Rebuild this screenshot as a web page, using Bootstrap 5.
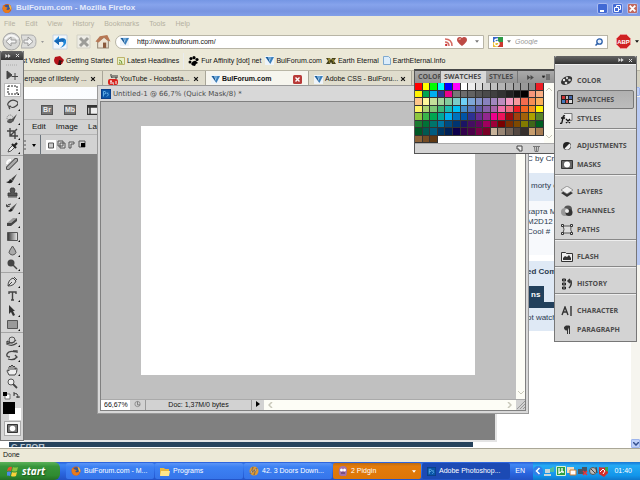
<!DOCTYPE html>
<html lang="en">
<head>
<meta charset="utf-8">
<meta name="viewport" content="width=device-width, initial-scale=1">
<title>BulForum.com - Mozilla Firefox</title>
<link href="https://cdn.jsdelivr.net/npm/bootstrap@5.3.0/dist/css/bootstrap.min.css" rel="stylesheet">
<style>
html,body{height:100%}
body{font:7px/10px "Liberation Sans",Arial,sans-serif;color:#111;background:#ece9d8;overflow:hidden}
button,input{font:inherit;color:inherit;border:0;background:none;padding:0;margin:0;border-radius:0}
a{color:inherit;text-decoration:none}
svg{display:block;flex:none}
h1,h2,p{font:inherit;margin:0}
.desk{min-height:100vh}
.caption-bar{height:16px;background:linear-gradient(#7596e4,#86a3ec 30%,#7894e0 70%,#829fe8);color:#e4ebfb;padding:0 2px}
.caption-bar h1{font:bold 8px/14px "Liberation Sans",sans-serif}
.win-btn{width:11px;height:11px;border:1px solid #a9bbf0;border-radius:2px;background:#4169d4}
.win-btn.closer{background:#c0685f}
.menu-row{height:16px;gap:10px;padding-left:4px;color:#b4b0a0}
.nav-row{height:19px;padding:0 1px 0 2px}
.back-btn{width:19px;height:19px}
.url-box{height:14px;background:#fff;border:1px solid #b8b5a6}
.url-box input{min-width:0;outline:0}
.search-box{width:120px}
.search-box input::placeholder{color:#999;font-style:italic;opacity:1}
.mark-row{height:19px;padding-left:12px;white-space:nowrap}
.mark-row a{display:flex;align-items:center;gap:2px;margin-right:4px}
.tab-strip{height:17px;background:#d3d0c0;border-top:1px solid #b9b6a6}
.tab-item{width:103px;border-right:1px solid #a9a698;padding:0 6px 0 5px;gap:2px;background:#e0ddcd;white-space:nowrap}
.tab-item.current{background:#f6f5ee;font-weight:bold}
.page{background:#fff;min-height:0;overflow:hidden}
.forum{width:104px;margin-left:auto;font:8px/10px "Liberation Sans",sans-serif;color:#2b3b50}
.forum p{padding:0 5px 0 0;white-space:nowrap;overflow:hidden;height:10px}
.cell-b{background:#dfe9f5}
.cell-w{background:#f7f9fc}
.forum-tab{background:#22405c;color:#fff;font-weight:bold}
.page-scroll{width:9px;background:#f6f5ef}
.scroll-end{height:9px;background:#bfd0f8;border:1px solid #9db4ec;border-radius:1px}
.scroll-thumb{height:168px;background:#b9caf3;margin-top:1px}
.cut-line{left:0;right:167px;bottom:1px;height:5px;background:#26425c;overflow:hidden;color:#b9c6d2;font:bold 9px/10px "Liberation Sans",sans-serif;padding-left:2px;border-left:9px solid #fff}
.status-row{height:14px;border-top:1px solid #aaa797;padding-left:3px;padding-bottom:1px}
.task-row{height:18px;background:linear-gradient(#2a5ed8,#3f86f3 15%,#2b66e0 60%,#2353c6);color:#fff}
.start-btn{width:60px;border-radius:0 6px 6px 0;background:linear-gradient(#5cb25a,#37953a 25%,#2f8a30 75%,#246f25);font:italic bold 10px/14px "Open Sans",sans-serif;color:#fff;text-shadow:1px 1px 1px #1c5a1e;margin-right:6px;padding-right:8px}
.task-btn{flex:0 1 88px;min-width:0;height:16px;gap:3px;padding:0 5px;border-radius:2px;margin-right:1px;background:linear-gradient(#5b95f7,#3c81f3 25%,#3675ea);text-align:left;white-space:nowrap;overflow:hidden}
.task-btn.alert-on{background:linear-gradient(#b96a12,#e37b0b 20%,#dd7607)}
.task-btn.pressed{background:#1c4ab4}
.tray{width:107px;background:linear-gradient(#1876d4,#25aaf4 20%,#1295ea 75%,#0f78cc);padding:0 8px 0 0;gap:1px}
.tool-pal{left:0;top:51px;width:24px;background:#d5d5d5;border:1px solid #777;border-top:0}
.dark-cap{height:9px;background:linear-gradient(#666,#333);color:#ddd;border-radius:2px 2px 0 0;gap:4px;padding-right:3px}
.dock .dark-cap{height:8px}
.tool-set{display:grid;grid-auto-rows:1fr;justify-items:center;padding:0 2px;border-bottom:1px solid #a5a5a5;margin-bottom:1px}
.tool-set button{width:17px;display:flex;align-items:center;justify-content:center;position:relative;color:#444}
.tool-set button.more::after{content:"";position:absolute;right:1px;bottom:1px;border:1px solid;border-color:transparent #111 #111 transparent}
.tool-set button.chosen{background:#fff;border:1px solid #bbb}
.set-a{height:88px}.set-b{height:116px}.set-c{height:59px}.set-d{height:57px;border:0;margin:0}
.ps-app{left:24px;top:87px;width:473px;height:355px;background:#808080;border-right:2px solid #e4e4e4;border-bottom:2px solid #e4e4e4}
.ps-top{height:12px;background:linear-gradient(90deg,#fff,#e3edfb)}
.ps-bar{background:#d2d2d2;border-top:1px solid #b4b4b4}
.ps-icons{height:20px;gap:11px;padding-left:17px}
.ps-menu{height:15px;gap:10px;font-size:8px;padding-left:8px}
.ps-opts{height:20px;gap:2px}
.app-tag{width:12px;height:10px;background:#777;border:1px solid #555;color:#eee;font-weight:bold;line-height:8px;text-align:center}
.doc-win{left:97px;top:85px;width:432px;height:329px;background:#d8d8d8;border:1px solid #999;padding:1px 2px 2px}
.doc-cap{height:14px;gap:2px;padding-left:1px;color:#4a4a4a}
.doc-cap h2{font:7px/10px "DejaVu Sans",sans-serif}
.doc-body{border:1px solid #808080;background:#c0c0c0}
.canvas-wrap{padding:24px 41px 24px 40px}
.sheet{background:#fff}
.rail{background:#fdfdf6;color:#c9c8ba}
.rail-v{width:9px}
.doc-foot{height:11px;background:#d2d2d2;border-top:1px solid #aaa}
.zoom-box{width:29px;background:#fff;padding-left:3px;line-height:10px}
.doc-size{width:107px;text-align:center;border:solid #999;border-width:0 1px}
.sw-pal{left:414px;top:69px;width:141px;background:#d4d4d4;border:1px solid #555;border-top:2px solid #484848;font:bold 7px/10px "Open Sans",sans-serif}
.sw-tabs{height:12px;background:linear-gradient(#aaa,#929292);color:#4a4a4a}
.sw-tabs button{padding:0 4px 0 3px;border-right:1px solid #777;overflow:hidden}
.sw-tabs button.current{background:#d8d8d8;border-color:#d8d8d8}
.sw-tabs .tab-cut{width:26px;white-space:nowrap}
.sw-grid{display:grid;grid-template-columns:repeat(17,1fr);grid-template-rows:repeat(8,1fr);height:60px;width:129px;background:#fff}
.sw-grid i{border:solid #333;border-width:0 1px 1px 0}
.sw-foot{height:10px;border-top:1px solid #aaa;gap:10px;padding:0 14px;color:#444}
.dock{left:554px;top:56px;width:83px;background:#d3d3d3;border:1px solid #777;border-top:0}
.dock-set{padding:6px 2px 0;border-bottom:1px solid #888;border-top:1px solid #eee}
.dock-set:last-child{border-bottom:0;padding-bottom:2px}
.dock-set button{height:19px;width:100%;gap:3px;padding:0 3px;color:#4c4c4c;font:bold 7px/10px "Open Sans",sans-serif;display:flex;align-items:center}
.dock-set button.chosen{background:linear-gradient(#b0b0b0,#bcbcbc);border:1px solid #777;border-radius:2px;padding:0 2px}
.ink-box{height:30px}
.fg{left:2px;top:11px;width:12px;height:12px;background:#000}
.bg{left:8px;top:17px;width:12px;height:12px;background:#fff}
.mask-btn{height:15px;width:17px;background:#f4f4f4;border:1px solid #aaa;margin:0 auto 4px;display:flex;align-items:center;justify-content:center}
</style>
<script src="https://cdn.jsdelivr.net/npm/bootstrap@5.3.0/dist/js/bootstrap.bundle.min.js"></script>
</head>
<body>
<svg width="0" height="0" class="position-absolute" aria-hidden="true">
<symbol id="fox" viewBox="0 0 12 12"><circle cx="6" cy="6" r="5.4" fill="#d85f15"/><path d="M3 3q3-3 6-.5L10 6Q8 9 5 7.500z" fill="#31579d"/><path d="M1 2 4 4 7 5 5 7Q7 9 10 6 10 11 6 11.500 0 11 1 2" fill="#e77b1b"/><path d="M8 1q4 2 3 7l-2-3" fill="#f5bb3a"/></symbol>
<symbol id="vee" viewBox="0 0 10 10"><path d="M0 0h10v10H0z" fill="#eef4fa"/><path d="M.5 1h3L6 9z" fill="#1d5d9a"/><path d="M3 1h4L5.500 5z" fill="#6ba6d6"/><path d="M7 1h3L6 9 5 6z" fill="#3b80bd"/></symbol>
<symbol id="ps" viewBox="0 0 12 12"><path d="M0 0h12v12H0z" fill="#0c3c84"/><path d="M1 1h10v10H1z" fill="#0a56a8"/><path d="M3 9V3h2q2 2 0 3H3M9 5H7l2 2-2 2" stroke="#6fbcf0" fill="none"/></symbol>
<symbol id="x" viewBox="0 0 8 8"><path d="m1.500 1.500 5 5m0-5-5 5" stroke="currentColor" stroke-width="1.600"/></symbol>
<symbol id="ff" viewBox="0 0 8 6"><path d="m0 0 4 3-4 3zM4 0l4 3-4 3z" fill="currentColor"/></symbol>
<symbol id="down" viewBox="0 0 6 4"><path d="M0 0h6L3 4z" fill="currentColor"/></symbol>
</svg>

<div class="desk d-flex flex-column position-relative">
<header>
<div class="caption-bar d-flex align-items-center">
<svg width="10" height="11"><use href="#fox"/></svg><h1 class="ms-1">BulForum.com - Mozilla Firefox</h1>
<div class="ms-auto d-flex gap-1">
<button class="win-btn" aria-label="Minimize"><svg width="9" height="9" viewBox="0 0 9 9"><path d="M2 7h4" stroke="#fff" stroke-width="2"/></svg></button>
<button class="win-btn" aria-label="Restore"><svg width="9" height="9" viewBox="0 0 9 9"><path d="M3.500 3V1.500h4v4H6M1.500 3.500h4v4h-4z" stroke="#fff" fill="none"/></svg></button>
<button class="win-btn closer" aria-label="Close"><svg width="9" height="9" viewBox="0 0 8 8" color="#fff"><use href="#x"/></svg></button>
</div></div>
<nav class="menu-row d-flex align-items-center"><a href="#">File</a><a href="#">Edit</a><a href="#">View</a><a href="#">History</a><a href="#">Bookmarks</a><a href="#">Tools</a><a href="#">Help</a></nav>
<div class="nav-row d-flex align-items-center">
<button class="back-btn" aria-label="Back"><svg width="19" height="19" viewBox="0 0 19 19"><circle cx="9.500" cy="9.500" r="8.500" fill="#d7d7d5" stroke="#a2a2a2"/><path d="M3 7q6-7 13 0" stroke="#f6f6f6" stroke-width="2" fill="none"/><path d="m9 5-5 4.500L9 14v-3h5V8H9z" fill="#f5f5f5" stroke="#999"/></svg></button>
<button aria-label="Forward"><svg width="16" height="15" viewBox="0 0 16 15"><path d="M0 1h10q5 0 5 6.500T10 14H0q3-6 0-13" fill="#dddddb" stroke="#acacac"/><path d="m7 3 5 4.500L7 12V9H3V6h4z" fill="#f5f5f5" stroke="#999"/></svg></button>
<svg class="mx-1" width="3" height="2" color="#999"><use href="#down"/></svg>
<button class="ms-1" aria-label="Reload"><svg width="16" height="16" viewBox="0 0 16 16"><path d="M1 1h14v14H1z" fill="#f2f7fc" stroke="#c8d4df"/><path d="M2 7 7 2v3q6-2 7 1 1 6-6 8 5-4 3-6-1-1-4 0v3z" fill="#2188d9"/><path d="m2 7 5 4V8q3-1 4 0l2-3q-3-1-6 0z" fill="#1767b4"/></svg></button>
<button class="ms-2" aria-label="Stop"><svg width="15" height="15" viewBox="0 0 15 15"><path d="M1 1h13v13H1z" fill="#edece5" stroke="#d4d2c5"/><path d="m4 4 8 8m0-8-8 8" stroke="#9c9c98" stroke-width="3"/></svg></button>
<button class="ms-1" aria-label="Home"><svg width="16" height="15" viewBox="0 0 14 14"><path d="M2 7v6h10V6L8 3z" fill="#eee5d5" stroke="#998c7a"/><path d="m0 7 4-5 7-1 3 6-3-1-3-3-5 5z" fill="#b77754"/><path d="M7 8h3v5H7z" fill="#8b5a3d"/></svg></button>
<div class="url-box flex-grow-1 d-flex align-items-center px-1 rounded-start-3 ms-1"><svg width="9" height="9"><use href="#vee"/></svg><input class="flex-grow-1 ms-2" type="text" aria-label="Address" value="http://www.bulforum.com/">
<svg width="8" height="8" viewBox="0 0 8 8"><path d="M0 1q7 0 7 7M0 4q4 0 4 4" stroke="#d56a62" fill="none" stroke-width="1.500"/><circle cx="1.200" cy="7" r="1.200" fill="#c33"/></svg>
<svg class="ms-1" width="10" height="9" viewBox="0 0 10 9"><path d="M5 9Q0 5 0 3 0 0 3 0q1 0 2 1 1-1 2-1 3 0 3 3 0 2-5 6" fill="#bd4a45"/><path d="M2 3q0-2 2-1" stroke="#eba" fill="none"/></svg>
<svg class="ms-2" width="4" height="3" color="#777"><use href="#down"/></svg></div>
<div class="url-box search-box d-flex align-items-center px-1 ms-1"><svg width="10" height="10" viewBox="0 0 10 10"><path d="M0 0h5v5H0z" fill="#3a67c8"/><path d="M5 0h5v5H5z" fill="#2d9a45"/><path d="M0 5h5v5H0z" fill="#e9ba2f"/><path d="M5 5h5v5H5z" fill="#c93830"/><path d="M5 2q-4 0-3 2t3 0M4 5q-4 1-2 3t4-1q0-2-2-2" stroke="#fff" fill="none" stroke-width="1.500"/></svg><svg class="ms-1" width="4" height="3" color="#777"><use href="#down"/></svg><input class="flex-grow-1 ms-1" type="text" aria-label="Search" placeholder="Google"><svg width="8" height="8" viewBox="0 0 8 8"><circle cx="4.500" cy="3.500" r="2.700" fill="#e6f0fd" stroke="#2a5ea8" stroke-width="1.300"/><path d="M3 5 .5 7.500" stroke="#2a5ea8" stroke-width="1.500"/></svg></div>
<button class="ms-2" aria-label="Adblock"><svg width="15" height="15" viewBox="0 0 15 15"><path d="M4.500.5h6l4 4v6l-4 4h-6l-4-4v-6z" fill="#cf2222" stroke="#e99"/><text x="7.500" y="10" text-anchor="middle" font-size="6" font-weight="bold" fill="#fff" font-family="Liberation Sans">ABP</text></svg></button>
<svg class="ms-1" width="4" height="3"><use href="#down"/></svg>
</div>
<nav class="mark-row d-flex align-items-center">
<a href="#">Most Visited</a>
<a href="#"><svg width="10" height="10" viewBox="0 0 10 10"><path d="M1 1 6 0l4 4-2 4-4 1Q0 8 0 4" fill="#b5141a"/><path d="m5 4 4 1-2 1v3H4" fill="#311"/></svg>Getting Started</a>
<a href="#"><svg width="8" height="8" viewBox="0 0 8 8"><path d="M.5.5h7v7h-7z" fill="#e8efc7" stroke="#bdb46c"/><path d="M2 3q3 0 3 4M2 5q1 0 1 2" stroke="#779a34" fill="none"/></svg>Latest Headlines</a>
<span class="border-start border-secondary-subtle me-1 py-2"></span>
<a href="#"><svg width="11" height="10" viewBox="0 0 11 10"><circle cx="2" cy="6" r="1.500"/><circle cx="3" cy="2.500" r="1.600"/><circle cx="6" cy="1.700" r="1.600"/><circle cx="9" cy="3.500" r="1.600"/><path d="M3 8q2-4 5-3l2 2-2 1-1 2q-3 0-4-2"/></svg>Fur Affinity [dot] net</a>
<a href="#"><svg width="9" height="9"><use href="#vee"/></svg>BulForum.com</a>
<a href="#"><svg width="10" height="8" viewBox="0 0 10 8"><path d="M0 1h4l1 2 1-2h4L8 4l2 3H6L5 5 4 7H0l2-3z" fill="#45411b"/><path d="M2 2h2v1H2m4 0h2M3 5h1m3 0h1" stroke="#bca936"/></svg>Earth Eternal</a>
<a href="#"><svg width="8" height="9" viewBox="0 0 8 9"><path d="M.5.500h5l2 2v6h-7z" fill="#dcedfb" stroke="#7ea9cf"/></svg>EarthEternal.Info</a>
</nav>
</header>
<div class="tab-strip d-flex">
<div class="tab-item d-flex align-items-center"><svg width="9" height="9"><use href="#vee"/></svg><a href="#" class="flex-grow-1">Userpage of lilstenly ...</a><button aria-label="Close tab"><svg width="6" height="6"><use href="#x"/></svg></button></div>
<div class="tab-item d-flex align-items-center"><svg width="10" height="11" viewBox="0 0 10 11"><path d="M3 0v2l1 2M5 1v3M7 1v3h2V1" stroke="#333" fill="none"/><rect y="5" width="10" height="6" rx="2" fill="#d7231d"/><path d="M2 7h2M3 7v3m2-2v2h1m2-3v3" stroke="#fff"/></svg><a href="#" class="flex-grow-1">YouTube - Hoobasta...</a><button aria-label="Close tab"><svg width="6" height="6"><use href="#x"/></svg></button></div>
<div class="tab-item current d-flex align-items-center"><svg width="9" height="9"><use href="#vee"/></svg><a href="#" class="flex-grow-1">BulForum.com</a><button aria-label="Close tab"><svg width="9" height="9" viewBox="0 0 9 9"><rect width="9" height="9" rx="1.500" fill="#b83a38"/><path d="m2.500 2.500 4 4m0-4-4 4" stroke="#fff" stroke-width="1.400"/></svg></button></div>
<div class="tab-item d-flex align-items-center"><svg width="9" height="9"><use href="#vee"/></svg><a href="#" class="flex-grow-1">Adobe CSS - BulForu...</a><button aria-label="Close tab"><svg width="6" height="6"><use href="#x"/></svg></button></div>
</div>

<main class="page flex-grow-1 d-flex position-relative">
<div class="forum">
<div style="padding-top:67px"><p>C by Crazy</p></div>
<div class="cell-b" style="margin-top:9px;padding:8px 0 10px"><p class="ps-1">morty e</p></div>
<div class="cell-w" style="padding:6px 0 18px"><p>карта Ма</p><p>M2D12 l</p><p>Cool #</p></div>
<div class="cell-b fw-bold" style="margin-top:6px;padding:6px 0 9px"><p>ed Comments</p></div>
<div class="cell-b" style="height:16px"><div class="forum-tab d-inline-block px-1 pt-1" style="height:16px">ns</div></div>
<div class="forum-tab" style="height:6px"></div>
<div class="cell-b" style="padding:5px 0 8px"><p>ot watching</p></div>
</div>
<div class="page-scroll d-flex flex-column"><div class="scroll-end"></div><div class="scroll-thumb mb-auto"></div><div class="scroll-end d-flex align-items-center justify-content-center"><svg width="6" height="4" viewBox="0 0 6 4"><path d="m0 0 3 3 3-3" stroke="#35508f" stroke-width="1.500" fill="none"/></svg></div></div>
<div class="cut-line position-absolute">С ГЛОП</div>
</main>
<footer>
<div class="status-row d-flex align-items-center">Done</div>
<div class="task-row d-flex align-items-center">
<button class="start-btn h-100 d-flex align-items-center justify-content-center"><svg class="me-1" width="11" height="11" viewBox="0 0 11 11"><path d="M1 2q2-2 4-1L4 5Q2 4 0 5z" fill="#e8542b"/><path d="M6 1q2 1 5 0l-1 4q-3 1-5 0z" fill="#8bc63f"/><path d="M0 6q2-1 4 0L3 10Q1 9-1 10z" fill="#4a8be8"/><path d="M5 6q2 1 5 0L9 10q-3 1-5 0z" fill="#fbd13b"/></svg>start</button>
<button class="task-btn d-flex align-items-center"><svg width="10" height="10"><use href="#fox"/></svg>BulForum.com - M...</button>
<button class="task-btn d-flex align-items-center"><svg width="10" height="9" viewBox="0 0 10 9"><path d="M0 1h4l1 1h4v6H0z" fill="#e9b93d"/><path d="M1 4h9L9 9H0z" fill="#ffe78c"/></svg>Programs</button>
<button class="task-btn d-flex align-items-center"><svg width="10" height="10" viewBox="0 0 10 10"><circle cx="5" cy="5" r="4.500" fill="#e09a32"/><path d="m1 8 3-7-1 5 5-4-3 7 1-5z" fill="#fff" stroke="#654" stroke-width=".6"/></svg>42. 3 Doors Down...</button>
<button class="task-btn alert-on d-flex align-items-center"><svg width="10" height="10" viewBox="0 0 10 10"><path d="M1 4q0-4 4-4t4 4-1 6H3Q0 9 1 4" fill="#a472aa"/><circle cx="3.500" cy="4" r="1.500" fill="#fff"/><circle cx="6.500" cy="4" r="1.500" fill="#fff"/><path d="M3 7h4" stroke="#503060"/></svg>2 Pidgin<svg class="ms-auto" width="4" height="3"><use href="#down"/></svg></button>
<button class="task-btn pressed d-flex align-items-center"><svg width="9" height="9"><use href="#ps"/></svg>Adobe Photoshop...</button>
<span class="ms-auto me-2">EN</span>
<div class="tray h-100 d-flex align-items-center">
<svg width="10" height="12" viewBox="0 0 10 12"><circle cx="5" cy="6" r="5" fill="#2f80e8"/><path d="M6.500 3 3.500 6l3 3" stroke="#fff" stroke-width="1.500" fill="none"/></svg>
<svg width="11" height="10" viewBox="0 0 11 10"><path d="M1 3h5v4H1zM0 8h7v2H0z" fill="#c8d6d8"/><path d="M7 2v4m2-5v5" stroke="#79d956"/></svg>
<svg width="10" height="10" viewBox="0 0 10 10"><path d="M.5.5h9v9h-9z" fill="#2e9f3f" stroke="#d9f3da"/><path d="M3 2v6M3 6q2 1 3-1V2m0 4h2" stroke="#fff" fill="none" stroke-width="1.300"/></svg>
<svg width="10" height="10" viewBox="0 0 10 10"><path d="M0 1h7v6H0z" fill="#f2dcc0"/><path d="M3 4h6v5H3z" fill="#fff" stroke="#c97d34"/></svg>
<svg width="10" height="10" viewBox="0 0 10 10"><path d="M0 3h6v5H0zm4-2h5v5H4z" fill="#456"/><path d="m5 5 4 4m0-4-4 4" stroke="#e33" stroke-width="1.500"/></svg>
<svg width="9" height="10" viewBox="0 0 9 10"><circle cx="4" cy="5" r="3.500" fill="#bbb" stroke="#555"/><path d="m2 3 4 4M7 1l1 6" stroke="#444"/></svg>
<svg width="9" height="11" viewBox="0 0 9 11"><path d="M0 1q4 1 9 0v6L5 11 0 8z" fill="#d42d2b"/><path d="m1 6 3-3 2 2-2 3" stroke="#fff" fill="none"/><path d="M6 1h3v5L6 4" fill="#3aa74c"/></svg>
<span class="ms-auto">01:40</span></div>
</div>
</footer>

<section class="ps-app position-absolute" aria-label="Photoshop">
<div class="ps-top"></div>
<div class="ps-bar ps-icons d-flex align-items-center"><button class="app-tag">Br</button><button class="app-tag">Mb</button><svg width="12" height="10" viewBox="0 0 12 10"><path d="M.5.5h12v9H.5zM0 2h12M3 2v8" stroke="#333" fill="#eee" stroke-width="1.500"/></svg></div>
<div class="ps-bar ps-menu d-flex align-items-center"><a href="#">Edit</a><a href="#">Image</a><a href="#">Layer</a></div>
<div class="ps-bar ps-opts d-flex align-items-center"><svg width="14" height="12" viewBox="0 0 14 12"><path d="M1 1v10" stroke="#555" stroke-dasharray="2"/><path d="M8 5h4l-2 3z"/></svg>
<span class="border-start border-secondary h-100"></span>
<svg width="43" height="12" viewBox="0 0 43 12"><path d="M3 1h10v10H3z" fill="#fff"/><path d="M5.500 4h5v5h-5z" fill="#ccc" stroke="#555"/><path d="M15 2h5v5h-5zM17 4h5v5h-5z" fill="#ddd" stroke="#555"/><path d="M26 9V3h5v2h-3v4z" fill="#ddd" stroke="#555"/><path d="M36 2h6v6h-6z" fill="none" stroke="#555"/><path d="M38 4h4v4h-4z"/></svg></div>
</section>

<section class="doc-win position-absolute d-flex flex-column" aria-label="Document">
<div class="doc-cap d-flex align-items-center"><svg width="10" height="10"><use href="#ps"/></svg><h2>Untitled-1 @ 66,7% (Quick Mask/8) *</h2></div>
<div class="doc-body flex-grow-1 d-flex flex-column">
<div class="flex-grow-1 d-flex"><div class="canvas-wrap flex-grow-1 d-flex"><div class="sheet flex-grow-1"></div></div><div class="rail rail-v d-flex flex-column justify-content-end align-items-center pb-1"><svg width="6" height="4" viewBox="0 0 6 4"><path d="m0 0 3 3 3-3" stroke="currentColor" fill="none"/></svg></div></div>
<div class="doc-foot d-flex"><label class="visually-hidden" for="zm">Zoom</label><input id="zm" class="zoom-box" value="66,67%"><svg class="mx-1" width="7" height="8" viewBox="0 0 8 8"><circle cx="4" cy="4" r="3" fill="none" stroke="#888"/><path d="M4 1v4h3" stroke="#777" fill="none"/></svg><div class="doc-size">Doc: 1,37M/0 bytes</div><svg class="mx-1" width="4" height="8" viewBox="0 0 4 8"><path d="m0 1 4 3-4 3z"/></svg><div class="rail flex-grow-1 d-flex justify-content-between align-items-center px-1"><svg width="5" height="6" viewBox="0 0 5 6"><path d="m4 0-3 3 3 3" stroke="currentColor" fill="none" stroke-width="1.500"/></svg><svg width="5" height="6" viewBox="0 0 5 6"><path d="m1 0 3 3-3 3" stroke="currentColor" fill="none" stroke-width="1.500"/></svg></div><svg width="9" height="9" viewBox="0 0 9 9"><path d="m1 9 8-8M4 9l5-5M7 9l2-2" stroke="#999"/></svg></div>
</div>
</section>

<aside class="tool-pal position-absolute" aria-label="Tools">
<div class="dark-cap d-flex align-items-center justify-content-end"><svg width="6" height="4"><use href="#ff"/></svg><svg width="5" height="5"><use href="#x"/></svg></div>
<div class="d-flex justify-content-center py-1" style="height:8px"><svg width="12" height="2"><path d="M0 1h12" stroke="#aaa" stroke-dasharray="1" /></svg></div>
<div class="tool-set set-a">
<button aria-label="Move"><svg width="12" height="11" viewBox="0 0 12 11"><path d="m1 1 5 4-5 4zM9 3v7M5.500 6.500h7" stroke="#444" fill="#444"/></svg></button>
<button class="more chosen" aria-label="Marquee"><svg width="11" height="10" viewBox="0 0 11 10"><path d="M1 1h9v8H1z" stroke="#222" fill="none" stroke-dasharray="2 1"/></svg></button>
<button class="more" aria-label="Lasso"><svg width="11" height="11" viewBox="0 0 11 11"><path d="M3 8Q-1 6 2 3t7-1 0 5-6 0q-2 1 0 3" stroke="#444" stroke-width="1.200" fill="none"/></svg></button>
<button class="more" aria-label="Quick selection"><svg width="12" height="12" viewBox="0 0 12 12"><path d="m5 7 6-6-4 8z" fill="#444"/><path d="M1 9q1-4 5-3l1 2q-2 4-6 1" fill="#555"/><circle cx="4" cy="5" r="3" fill="none" stroke="#777" stroke-dasharray="1"/></svg></button>
<button class="more" aria-label="Crop"><svg width="11" height="11" viewBox="0 0 11 11"><path d="M3 0v8h8M0 3h8v8M3 8l7-7" stroke="#444" fill="none" stroke-width="1.400"/></svg></button>
<button class="more" aria-label="Eyedropper"><svg width="11" height="11" viewBox="0 0 11 11"><path d="m1 10 1-3 4-4 2 2-4 4z" fill="#eee" stroke="#555"/><path d="m5 2 4 4M7 4l3-3" stroke="#222" stroke-width="2.200"/></svg></button>
</div>
<div class="tool-set set-b">
<button class="more" aria-label="Healing brush"><svg width="12" height="12" viewBox="0 0 12 12"><path d="m2 10 8-8" stroke="#444" stroke-width="4.500" stroke-linecap="round"/><path d="m2 10 8-8" stroke="#aaa" stroke-width="2.500" stroke-linecap="round"/><path d="M1 6q0-4 4-4" stroke="#fff" stroke-width="2" fill="none"/></svg></button>
<button class="more" aria-label="Brush"><svg width="12" height="11" viewBox="0 0 12 11"><path d="m5 6 6-5-4 7z" fill="#444"/><path d="M0 9q3 0 4-3l3 2q-2 4-7 1" fill="#222"/></svg></button>
<button class="more" aria-label="Clone stamp"><svg width="11" height="11" viewBox="0 0 11 11"><path d="M4 1h3l1 2-1 3h3v3H1V6h3L3 3zM1 10h9" fill="#555" stroke="#333" stroke-width=".8"/></svg></button>
<button class="more" aria-label="History brush"><svg width="12" height="11" viewBox="0 0 12 11"><path d="m5 6 6-5-4 7z" fill="#555"/><path d="M2 9q2-1 3-3l2 2q-2 3-5 1" fill="#222"/><path d="M1 5q0-3 4-3M0 2l1 3 3-1" stroke="#444" fill="none"/></svg></button>
<button class="more" aria-label="Eraser"><svg width="12" height="10" viewBox="0 0 12 10"><path d="m1 6 6-5h4L5 6z" fill="#999"/><path d="M1 6h4l6-5v3L5 9H1z" fill="#444"/></svg></button>
<button class="more" aria-label="Gradient"><svg width="11" height="9" viewBox="0 0 11 9"><defs><linearGradient id="gr"><stop stop-color="#333"/><stop offset="1" stop-color="#eee"/></linearGradient></defs><path d="M.5.5h10v8H.5z" fill="url(#gr)" stroke="#555"/></svg></button>
<button class="more" aria-label="Blur"><svg width="9" height="11" viewBox="0 0 9 11"><path d="M4.500 1Q8 6 8 7.500 7 10 4.500 10T1 7.500Q1 6 4.500 1" fill="#aaa" stroke="#555"/></svg></button>
<button class="more" aria-label="Dodge"><svg width="11" height="11" viewBox="0 0 11 11"><circle cx="4" cy="4" r="3.500" fill="#444"/><path d="m6 6 4 4" stroke="#444" stroke-width="1.500"/></svg></button>
</div>
<div class="tool-set set-c">
<button class="more" aria-label="Pen"><svg width="11" height="11" viewBox="0 0 11 11"><path d="M1 10q0-6 5-8l3 3q-2 5-8 5l4-4M7 1l3 3" fill="#ddd" stroke="#444"/></svg></button>
<button class="more" aria-label="Type"><svg width="9" height="10" viewBox="0 0 9 10"><path d="M1 3V1h7v2M4.500 1v8M3 9h3" stroke="#444" stroke-width="1.400" fill="none"/></svg></button>
<button class="more" aria-label="Path selection"><svg width="8" height="11" viewBox="0 0 8 11"><path d="m1 0 6 6H5l2 4-2 1-2-4-2 2z" fill="#333"/></svg></button>
<button class="more" aria-label="Rectangle"><svg width="11" height="9" viewBox="0 0 11 9"><path d="M.5.5h10v8H.5z" fill="#999" stroke="#555"/></svg></button>
</div>
<div class="tool-set set-d">
<button class="more" aria-label="3D rotate"><svg width="12" height="11" viewBox="0 0 12 11"><path d="M1 5q5 4 9-1M1 8q5 3 10-1M1 5l0 3 3-1" stroke="#444" fill="none" stroke-width="1.200"/><circle cx="6" cy="4" r="3" fill="none" stroke="#555"/></svg></button>
<button class="more" aria-label="3D orbit"><svg width="12" height="11" viewBox="0 0 12 11"><path d="M10 2Q3 0 1 4q-1 3 3 3M2 9q6 2 9-2L9 5M7 1h4v2" stroke="#444" fill="none" stroke-width="1.300"/></svg></button>
<button class="more" aria-label="Hand"><svg width="12" height="12" viewBox="0 0 12 12"><path d="M3 11 1 7q0-2 2 0V3q1-2 2 0V2q1-2 2 0v1q1-2 2 0v2q2-2 2 0 0 4-2 6zM5 3v3m2-3v3m2-2v2" fill="#eee" stroke="#444"/></svg></button>
<button aria-label="Zoom"><svg width="11" height="11" viewBox="0 0 11 11"><circle cx="4" cy="4" r="3" fill="#eee" stroke="#555"/><path d="m6 6 4 4" stroke="#444" stroke-width="1.800"/></svg></button>
</div>
<div class="ink-box position-relative"><svg width="22" height="9" viewBox="0 0 22 9"><path d="M4 3h5v5H4z" fill="#fff" stroke="#777"/><path d="M2 1h4v4H2z"/><path d="M13 3q4-2 4 4M13 1v4M15 6h4" stroke="#333" fill="none"/></svg><div class="bg position-absolute"></div><div class="fg position-absolute"></div></div>
<button class="mask-btn" aria-label="Quick mask"><svg width="11" height="9" viewBox="0 0 11 9"><path d="M.5.500h10v8H.5z" fill="#777" stroke="#333"/><circle cx="5.500" cy="4.500" r="2.800" fill="#fff"/></svg></button>
</aside>

<aside class="sw-pal position-absolute" aria-label="Swatches">
<div class="sw-tabs d-flex align-items-stretch"><button class="tab-cut">COLOR</button><button class="current">SWATCHES</button><button>STYLES</button><div class="ms-auto d-flex align-items-center gap-2 pe-1"><svg width="7" height="5"><use href="#ff"/></svg><svg width="8" height="7" viewBox="0 0 8 7"><path d="m0 2 3 0-1.500 2zM4 1h4M4 3h4M4 5h4" stroke="#444"/></svg></div></div>
<div class="d-flex"><div class="sw-grid" id="swatches"></div><div class="rail flex-grow-1 d-flex flex-column align-items-center justify-content-between py-1"><svg width="6" height="4" viewBox="0 0 6 4"><path d="m0 4 3-3 3 3" stroke="currentColor" fill="none"/></svg><svg width="6" height="4" viewBox="0 0 6 4"><path d="m0 0 3 3 3-3" stroke="currentColor" fill="none"/></svg></div></div>
<div class="sw-foot d-flex align-items-center justify-content-end"><svg width="7" height="7" viewBox="0 0 7 7"><path d="M1 1h5v5H3V4H1z" fill="#eee" stroke="#444"/></svg><svg width="7" height="7" viewBox="0 0 7 7"><path d="M0 1.500h7M1.500 2l.5 4.500h3L5.500 2M3.500 2v4" stroke="#777" fill="none"/></svg></div>
</aside>

<aside class="dock position-absolute" aria-label="Panels">
<div class="dark-cap d-flex align-items-center justify-content-end"><svg width="6" height="4"><use href="#ff"/></svg><svg width="5" height="5"><use href="#x"/></svg></div>
<div class="dock-set">
<button><svg width="14" height="12" viewBox="0 0 14 12"><path d="M1 7q1-5 7-6 5 0 4 4t-7 5q-4 0-4-3" fill="#333"/><circle cx="7" cy="3" r="1.200" fill="#ccc"/><circle cx="4" cy="5" r="1.200" fill="#eee"/><circle cx="9.500" cy="5" r="1.300" fill="#ccc"/><circle cx="6" cy="8" r="1.300" fill="#ddd"/></svg>COLOR</button>
<button class="chosen"><svg width="14" height="9" viewBox="0 0 14 9"><path d="M1 0h12v9H1z" fill="#222"/><path d="M2 1h3v3H2z" fill="#c33"/><path d="M6 1h2v3H6z" fill="#bbb"/><path d="M9 1h3v3H9z" fill="#46a"/><path d="M2 5h3v3H2z" fill="#47b"/><path d="M6 5h2v3H6z" fill="#c55"/><path d="M9 5h3v3H9z" fill="#ddd"/></svg>SWATCHES</button>
<button><svg width="14" height="11" viewBox="0 0 14 11"><path d="M4 .5h8v7H7" fill="#eee" stroke="#777"/><path d="M5 3Q3 2 3 5L2 9q0 2-2 1M1 5h4M6 6l4 4m0-4-4 4" stroke="#111" stroke-width="1.300" fill="none"/></svg>STYLES</button></div>
<div class="dock-set">
<button><svg width="14" height="10" viewBox="0 0 14 10"><circle cx="7" cy="5" r="4" fill="#222"/><path d="M4.500 7.500A3.500 3.500 0 0 0 9.500 2.500z" fill="#eee"/></svg>ADJUSTMENTS</button>
<button><svg width="14" height="9" viewBox="0 0 14 9"><path d="M1.500.5h11v8h-11z" fill="#666" stroke="#333"/><circle cx="7" cy="4.500" r="3" fill="#fff"/></svg>MASKS</button></div>
<div class="dock-set">
<button><svg width="14" height="11" viewBox="0 0 14 11"><path d="m1 7 6-3 6 3-6 4z" fill="#333"/><path d="m1 4 6-4 6 4-6 4z" fill="#eee" stroke="#777" stroke-width=".7"/></svg>LAYERS</button>
<button><svg width="14" height="12" viewBox="0 0 14 12"><circle cx="8" cy="4.500" r="4" fill="#555"/><circle cx="5" cy="7" r="4" fill="#999"/><circle cx="9" cy="7.500" r="3.500" fill="#333"/><circle cx="7" cy="6" r="2" fill="#eee"/></svg>CHANNELS</button>
<button><svg width="14" height="11" viewBox="0 0 14 11"><path d="M3 9Q5 5 3 2h8q-1 4 1 7z" fill="#ddd" stroke="#555"/><path d="M1.500.5h2v2h-2zm9 0h2v2h-2zm-9 8h2v2h-2zm9 0h2v2h-2z" fill="#eee" stroke="#333"/></svg>PATHS</button></div>
<div class="dock-set"><button><svg width="14" height="11" viewBox="0 0 14 11"><path d="M1.500 1.500h4l1 1h6v8h-11z" fill="#eee" stroke="#333"/><path d="M3 9V7l2-2 2 1 2-2 2 3v2z" fill="#333"/></svg>FLASH</button></div>
<div class="dock-set"><button><svg width="14" height="12" viewBox="0 0 14 12"><path d="M2.500 1h3v2h-3zm0 4h3v2h-3zm0 4h3v2h-3z" fill="#888" stroke="#222"/><path d="M8 3h3q1 4-2 7M10 1 8 3l2 2" stroke="#333" stroke-width="1.500" fill="none"/></svg>HISTORY</button></div>
<div class="dock-set">
<button><svg width="14" height="10" viewBox="0 0 14 10"><path d="M2 9 5 1l3 8M3 6h4M11 0v10" stroke="#333" stroke-width="1.400" fill="none"/></svg>CHARACTER</button>
<button><svg width="14" height="10" viewBox="0 0 14 10"><path d="M9.500 1H6a2 2 0 0 0 1 4h1" fill="#333" stroke="#333"/><path d="M7.500 1v8m2-8v8" stroke="#333"/></svg>PARAGRAPH</button></div>
</aside>
</div>
<script>
const rows=[
"f00 ff0 0f0 0ff 00f f0f fff eee ddd ccc c0c0c0 b4b4b4 aaa a0a0a0 999 8c8c8c ed1c24",
"fff200 00a651 00aeef 2e3192 ec008c 777 6c6c6c 626262 555 4a4a4a 404040 333 222 111 000 f7977a f9ad81",
"fdc68a fff79a c4df9b a2d39c 82ca9d 7bcdc8 6ecff6 7ea7d8 8493ca 8882be a187be bc8dbf f49ac2 f6989d f26c4f f68e55 fbaf5c",
"fff467 acd372 7cc576 3bb878 1abbb4 00bff3 438cca 5574b9 605ca8 855fa8 a763a8 f06ea9 f26d7d ed1c24 f26522 f7941d fff200",
"8dc73f 39b54a 00a651 00a99d 00aeef 0072bc 0054a6 2e3192 662d91 92278f ec008c ed145b 9e0b0f a0410d a36209 aba000 598527",
"1a7b30 007236 00746b 0076a3 004b80 003471 1b1464 440e62 630460 9e005d 9e0039 790000 7b2e00 7d4900 827b00 406618 005e20",
"005826 005952 005b7f 003663 002157 0d004c 32004b 4b0049 7b0046 7a0026 c7b299 998675 736357 534741 362f2d c69c6d a67c52",
"8c6239 754c24 603913"];
const grid=document.getElementById("swatches");
rows.join(" ").split(" ").forEach(c=>{const i=document.createElement("i");i.style.background="#"+c;grid.append(i)});
</script>
</body>
</html>
